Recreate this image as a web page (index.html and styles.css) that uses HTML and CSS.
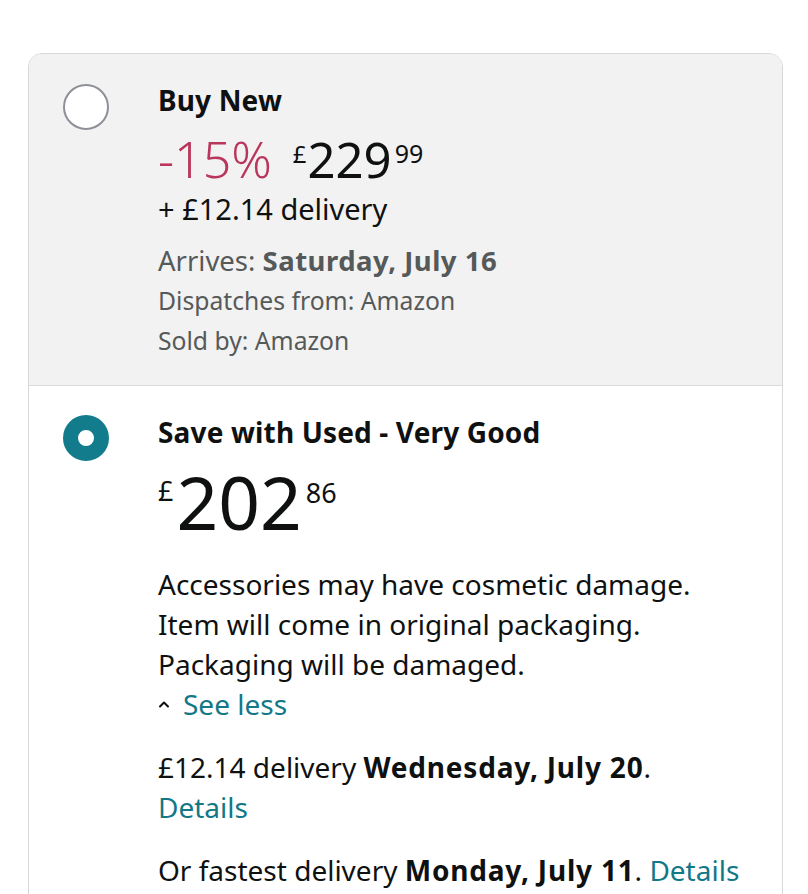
FILE: index.html
```html
<!DOCTYPE html>
<html lang="en">
<head>
<meta charset="utf-8">
<title>Buying options</title>
<link rel="stylesheet" href="styles.css">
</head>
<body>
<div class="card">
  <section class="option option-new">
    <div class="radio radio-off"></div>
    <div class="details">
      <div class="title">Buy New</div>
      <div class="price-row">
        <span class="discount">-15%</span>
        <span class="price">
          <span class="sym">£</span><span class="whole">229</span><span class="frac">99</span>
        </span>
      </div>
      <div class="line delivery-top">+ £12.14 delivery</div>
      <div class="line gray arrives">Arrives: <b>Saturday, July 16</b></div>
      <div class="line gray small">Dispatches from: Amazon</div>
      <div class="line gray small">Sold by: Amazon</div>
    </div>
  </section>
  <section class="option option-used">
    <div class="radio radio-on"></div>
    <div class="details">
      <div class="title">Save with Used - Very Good</div>
      <div class="big-price">
        <span class="sym">£</span><span class="whole">202</span><span class="frac">86</span>
      </div>
      <p class="condition">Accessories may have cosmetic damage.<br>Item will come in original packaging.<br>Packaging will be damaged.</p>
      <div class="line toggle">
        <svg class="chev" width="12" height="8" viewBox="0 0 12 8"><path d="M2 6.5 L6 2.5 L10 6.5" fill="none" stroke="#0f1111" stroke-width="2" stroke-linecap="round" stroke-linejoin="round"/></svg>
        <span class="link">See less</span>
      </div>
      <div class="line delivery">£12.14 delivery <b>Wednesday, July 20</b>.</div>
      <div class="line"><span class="link">Details</span></div>
      <div class="line fastest">Or fastest delivery <b>Monday, July 11</b>. <span class="link">Details</span></div>
    </div>
  </section>
</div>
</body>
</html>
```

FILE: styles.css
```css
html, body {
  margin: 0;
  padding: 0;
  background: #ffffff;
}

body {
  font-family: "Noto Sans", "Open Sans", "Liberation Sans", Arial, sans-serif;
  color: #0f1111;
  font-size: 28px;
}

.card {
  margin: 53px 25px 0 28px;
  border: 1px solid #d5d9d9;
  border-radius: 14px;
  overflow: hidden;
  min-height: 900px;
}

.option {
  display: flex;
  align-items: flex-start;
  padding: 26px 20px 0 34px;
}

.option-new {
  background: #f2f2f2;
  border-bottom: 1px solid #d9dada;
  padding-bottom: 24px;
}

.radio {
  flex: none;
  width: 46px;
  height: 46px;
  border-radius: 50%;
  box-sizing: border-box;
  margin-top: 4px;
  margin-right: 49px;
}

.option-used .radio {
  margin-top: 3px;
}

.radio-off {
  background: #ffffff;
  border: 2px solid #8d9096;
}

.radio-on {
  background: #ffffff;
  border: 15px solid #127c8c;
}

.details {
  flex: 1;
  min-width: 0;
}

.title {
  font-size: 28px;
  font-weight: 700;
  line-height: 40px;
  letter-spacing: 0.15px;
}

.price-row {
  display: flex;
  align-items: flex-start;
  margin-top: 14px;
  height: 50px;
}

.discount {
  font-size: 50px;
  line-height: 50px;
  color: #b9375c;
  font-weight: 300;
  margin-right: 21px;
}

.price {
  display: flex;
  align-items: flex-start;
}

.price .sym {
  font-size: 24px;
  line-height: 24px;
  margin-top: 8px;
  margin-right: 1px;
}

.price .whole {
  font-size: 49px;
  line-height: 50px;
}

.price .frac {
  font-size: 25px;
  line-height: 25px;
  margin-top: 7px;
  margin-left: 3px;
}

.line {
  line-height: 40px;
}

.line b {
  letter-spacing: 0.8px;
}

.delivery-top {
  margin-top: 5px;
  font-size: 29px;
}

.gray {
  color: #565959;
}

.arrives {
  margin-top: 12px;
  font-size: 27.5px;
}

.line.arrives b {
  letter-spacing: 0.5px;
}

.small {
  font-size: 24.7px;
}

.big-price {
  display: flex;
  align-items: flex-start;
  margin-top: 10px;
  height: 80px;
}

.big-price .sym {
  font-size: 27px;
  line-height: 27px;
  margin-top: 15px;
  margin-right: 3px;
}

.big-price .whole {
  font-size: 73px;
  line-height: 80px;
}

.big-price .frac {
  font-size: 27px;
  line-height: 27px;
  margin-top: 17px;
  margin-left: 4px;
}

.condition {
  margin: 22px 0 0;
  line-height: 40px;
}

.toggle {
  display: flex;
  align-items: center;
}

.chev {
  margin-right: 13px;
}

.link {
  color: #127888;
}

.delivery {
  margin-top: 23px;
}

.fastest {
  margin-top: 23px;
}
```
